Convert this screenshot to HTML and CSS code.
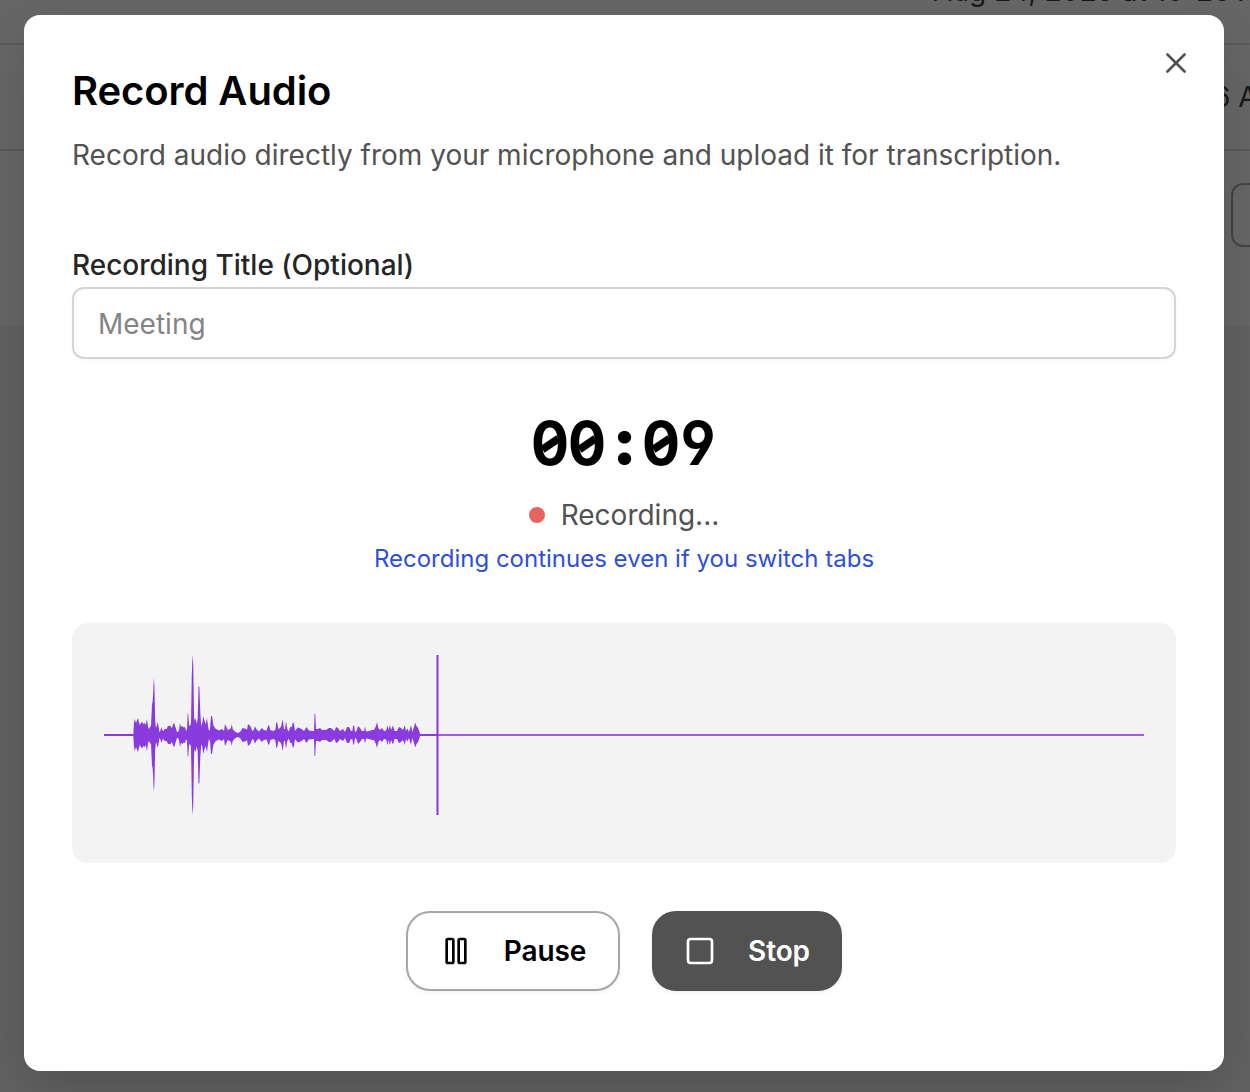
FILE: index.html
```
<!DOCTYPE html>
<html lang="en">
<head>
<meta charset="utf-8">
<title>Record Audio</title>
<link rel="stylesheet" href="styles.css">
</head>
<body>
<div class="page" aria-hidden="true">
  <div class="row row-first"><span class="date">Aug 24, 2025 at 10-26 AM</span></div>
  <div class="row row-second"><span class="time">6 AM</span></div>
  <div class="row row-last"><span class="page-button"></span></div>
</div>
<div class="overlay">
  <main class="dialog" role="dialog" aria-labelledby="title">
    <button class="close" aria-label="Close">
      <svg width="32" height="32" viewBox="0 0 24 24" fill="none" stroke="currentColor" stroke-width="2" stroke-linecap="round"><path d="M18.4 5.6 5.6 18.4M5.6 5.6l12.8 12.8"/></svg>
    </button>
    <h1 class="title" id="title">Record Audio</h1>
    <p class="description"><span>Record audio directly from your microphone and upload it for transcription.</span></p>
    <label class="label" for="name"><span>Recording Title (Optional)</span></label>
    <input class="input" id="name" type="text" placeholder="Meeting">
    <div class="timer"><span class="digit zero">0</span><span class="digit zero">0</span><span class="digit colon">:</span><span class="digit zero">0</span><span class="digit">9</span></div>
    <div class="status"><span class="dot"></span><span>Recording...</span></div>
    <p class="hint"><span>Recording continues even if you switch tabs</span></p>
    <div class="wave-panel">
      <svg class="wave" width="1040" height="160" viewBox="0 0 1040 160">
        <rect class="wave-rest" x="333" y="79" width="707" height="2"/>
        <path class="wave-body" id="wave"/>
        <rect class="wave-edge" x="332" y="0" width="3" height="160"/>
        <rect class="wave-cursor" x="333" y="0" width="1" height="160"/>
      </svg>
    </div>
    <div class="actions">
      <button class="button button-pause">
        <svg width="32" height="32" viewBox="0 0 24 24" fill="none" stroke="currentColor" stroke-width="2"><rect x="5" y="3" width="5" height="18" rx="1"/><rect x="14" y="3" width="5" height="18" rx="1"/></svg>
        <span>Pause</span>
      </button>
      <button class="button button-stop">
        <svg width="32" height="32" viewBox="0 0 24 24" fill="none" stroke="currentColor" stroke-width="2"><rect x="3" y="3" width="18" height="18" rx="2"/></svg>
        <span>Stop</span>
      </button>
    </div>
  </main>
</div>
<script src="wave.js"></script>
</body>
</html>
```
FILE: styles.css
```
* { box-sizing: border-box; }
body {
  margin: 0;
  height: 1092px;
  overflow: hidden;
  background: #f3f3f3;
  color: #000;
  font-family: Inter, "Liberation Sans", sans-serif;
  font-size: 28px;
  line-height: 40px;
}
h1, p { margin: 0; font-weight: 400; }
button { font: inherit; padding: 0; }

.page { background: #fff; height: 326px; }
.row { border-bottom: 2px solid #e2e2e2; display: flex; }
.row-first { height: 45px; }
.row-second { height: 106px; }
.row-last { height: 175px; border: 0; padding: 32px 0 0 1231px; }
.date { margin: -29px 0 0 933px; white-space: nowrap; color: #404040; letter-spacing: .1px; }
.time { margin: 32px 0 0 1213px; white-space: nowrap; color: #404040; }
.page-button { width: 80px; height: 64px; flex: none; border: 2px solid #a8a8a8; border-radius: 12px; }

.overlay {
  position: absolute;
  inset: 0;
  padding: 15px 26px 21px 24px;
  background: rgba(0, 0, 0, .6);
}
.dialog {
  position: relative;
  width: 1200px;
  height: 1056px;
  padding: 48px;
  background: #fff;
  border-radius: 16px;
  box-shadow: 0 20px 50px -6px rgba(0, 0, 0, .18);
  display: flex;
  flex-direction: column;
}
.close {
  position: absolute;
  right: 32px;
  top: 32px;
  width: 32px;
  height: 32px;
  border: 0;
  background: none;
  color: #525252;
}
.close svg { display: block; }
.title { margin-top: 4px; font-size: 40px; line-height: 48px; font-weight: 600; letter-spacing: -.08px; }
.description { margin-top: 20px; color: #525252; letter-spacing: -.005px; }
.label { margin-top: 70px; color: #262626; font-weight: 500; letter-spacing: -.01px; }
.input {
  margin-top: 2px;
  height: 72px;
  padding: 2px 24px 0;
  border: 2px solid #d4d4d4;
  border-radius: 12px;
  background: #fff;
  font: inherit;
  box-shadow: 0 2px 4px rgba(0, 0, 0, .03);
}
.input::placeholder { color: #848484; opacity: 1; }
.timer {
  margin-top: 54px;
  display: flex;
  justify-content: center;
  font-size: 60px;
  line-height: 60px;
  font-weight: 700;
  font-feature-settings: "cv04";
}
.digit {
  position: relative;
  width: 37px;
  display: flex;
  justify-content: center;
  transform: translateX(-.5px) scaleX(.94);
}
.zero::after {
  content: "";
  position: absolute;
  left: 9px;
  top: 27px;
  width: 20px;
  height: 8px;
  background: #000;
  transform: rotate(-32deg);
}
.colon { font-weight: 900; transform: translateY(-2px) scaleX(1.1) scaleY(1.06); }
.status { margin-top: 22px; display: flex; justify-content: center; align-items: center; gap: 16px; color: #525252; }
.dot { width: 16px; height: 16px; border-radius: 50%; background: #e7645c; }
.hint { margin-top: 8px; font-size: 24px; line-height: 32px; text-align: center; color: #2e4fd9; }
.wave-panel { margin-top: 48px; height: 240px; padding: 32px; border-radius: 16px; background: #f3f3f3; }
.wave { display: block; }
.wave-body { fill: #893bdf; }
.wave-rest { fill: #a25aec; }
.wave-edge { fill: #893bdf; opacity: .55; }
.wave-cursor { fill: #893bdf; }
.actions { margin-top: 48px; display: flex; justify-content: center; gap: 32px; }
.button {
  height: 80px;
  display: flex;
  align-items: center;
  justify-content: center;
  gap: 32px;
  border-radius: 24px;
  border: 2px solid #a6a6a6;
  font-weight: 600;
  letter-spacing: -.1px;
  box-shadow: 0 2px 4px rgba(0, 0, 0, .06);
}
.button svg { flex: none; }
.button-pause { width: 214px; background: #fff; color: #000; }
.button-stop { width: 190px; background: #525252; border-color: #525252; color: #fff; }
```
FILE: wave.js
```
// Pairs of x position and half height, relative to the left end of the centre line.
const samples = `0,1 29.3,1 30,12 30.7,16 32,12 34,17 35.7,10 38,13.5 39.3,11 40.7,12 41.7,10 43,16 44,8 45,6 46,8 47,9 48,30 48.7,34 49.3,45 49.8,57 50.4,50 51.2,14
52,7 52.7,9 53.7,13 54.7,8 55.3,3 56.3,4 57.3,8 58.3,5 59.3,4 60.7,6 62.7,6 64,9 65.3,9 66.3,9.5 67.3,7 68.3,8 69.3,11 70.3,12 71.7,7 73,3 74,3 75,5
76,12 77,8 78.3,9 79.7,7.5 81,8 82,4 83,6 83.7,22 84.3,21 85,10 86,9 87,12 87.8,60 88.5,80 89.2,72 90.1,18 90.7,14 91.7,17 92.7,11 93.7,16 94.5,49 95.4,48 96.3,22
97.3,9 98.3,12 99.3,19 100.3,15 101.7,11 103,17 104,9 105,4 106,6 107,19 108,19 109.3,10 111.3,6.5 114.7,4.5 118,6 120,4 121,11 122,9 123.7,5 126,6 127,7 127.7,11
128.7,6 130.3,4 133.3,2 136,3 138.7,7 142,6 143,5 144,11 146.3,9 148.3,4 149.7,5 151,8.5 153,5 155,3.5 157.7,7 159.7,5 162.7,4.5 164.3,10 165.3,9 166.3,5
169.3,4 171.3,5 172.3,13 173.3,12 174.3,6 176,7 177.3,9 178.7,16 180,6 181,6 182,14 183.3,6 184.7,3.5 186.3,8 187.7,8 189,13 190,11 191,4 193.7,7.5 196.7,6.5
200,4 202.7,8 204.7,4.5 208.7,4 210,4 210.5,21 211.2,21 212,6 214,6 216,7 218,5 222,5 225,7 227,7 229,5 230.5,4 232,8 234,7 236,4 239,6 241,3 243,8 245,8 247,4 248.3,4
249.3,10 250.2,9 251,3 252.5,4 254,9 256,7 258,4 260,4 261,8.5 262,3.5 265,4 268,5 270,5 272,9 273,13 274.3,7 276,5 278,7 280,4
281,4 282.3,5 283.3,10 284.5,5 286,10 287,5 289,9.5 290.5,4 293,4 295,8 297,7 299,5 300.7,10 302,4 303.5,6.5 305,3 307,10 308.3,3 310,8 311.3,12.5 312.5,9 314,7 315.5,3 316,1 333,1`
  .trim().split(/\s+/).map(pair => pair.split(",").map(Number));

const middle = 80;
const upper = samples.map(([x, h]) => `${x} ${middle - h}`);
const lower = samples.map(([x, h]) => `${x} ${middle + h}`).reverse();
document.getElementById("wave").setAttribute("d", `M${[...upper, ...lower].join("L")}Z`);
```
